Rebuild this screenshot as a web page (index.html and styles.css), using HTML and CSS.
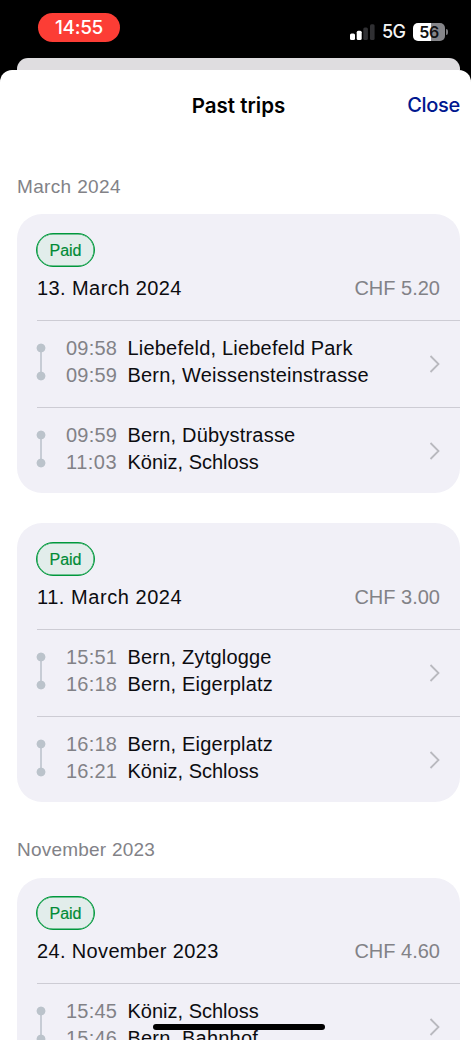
FILE: index.html
```html
<!DOCTYPE html>
<html lang="en">
<head>
<meta charset="utf-8">
<title>Past trips</title>
<link rel="stylesheet" href="styles.css">
</head>
<body>
<div class="screen">
  <header class="status">
    <span class="clock">14:55</span>
    <div class="status-right">
      <svg class="signal" width="25" height="17" viewBox="0 0 25 17"><g fill="#fff"><rect x="0" y="9.5" width="5" height="6.5" rx="1.5"/><rect x="6.7" y="6.8" width="5" height="9.2" rx="1.5"/></g><g fill="#303033"><rect x="13.3" y="3.6" width="4.6" height="12.4" rx="1.5"/><rect x="20" y="0.3" width="4.6" height="15.7" rx="1.5"/></g></svg>
      <span class="network">5G</span>
      <span class="battery">56</span>
      <span class="battery-cap"></span>
    </div>
  </header>
  <div class="back-sheet"></div>
  <main class="sheet">
    <div class="nav"><h1 class="title">Past trips</h1><a class="close">Close</a></div>
    <h2 class="month">March 2024</h2>
    <section class="card">
      <div class="card-head">
        <span class="badge">Paid</span>
        <div class="summary"><span class="date">13. March 2024</span><span class="price">CHF 5.20</span></div>
      </div>
      <div class="trip">
        <div class="track"></div>
        <div class="stops"><span class="time">09:58</span><span class="place">Liebefeld, Liebefeld Park</span><span class="time">09:59</span><span class="place">Bern, Weissensteinstrasse</span></div>
        <svg class="chevron" width="12" height="20" viewBox="0 0 12 20"><path d="M1.5 2 9.5 10l-8 8"/></svg>
      </div>
      <div class="trip">
        <div class="track"></div>
        <div class="stops"><span class="time">09:59</span><span class="place">Bern, Dübystrasse</span><span class="time eleven">11:03</span><span class="place tight">Köniz, Schloss</span></div>
        <svg class="chevron" width="12" height="20" viewBox="0 0 12 20"><path d="M1.5 2 9.5 10l-8 8"/></svg>
      </div>
    </section>
    <section class="card">
      <div class="card-head">
        <span class="badge">Paid</span>
        <div class="summary"><span class="date eleven">11. March 2024</span><span class="price">CHF 3.00</span></div>
      </div>
      <div class="trip">
        <div class="track"></div>
        <div class="stops"><span class="time">15:51</span><span class="place">Bern, Zytglogge</span><span class="time">16:18</span><span class="place">Bern, Eigerplatz</span></div>
        <svg class="chevron" width="12" height="20" viewBox="0 0 12 20"><path d="M1.5 2 9.5 10l-8 8"/></svg>
      </div>
      <div class="trip">
        <div class="track"></div>
        <div class="stops"><span class="time">16:18</span><span class="place">Bern, Eigerplatz</span><span class="time">16:21</span><span class="place tight">Köniz, Schloss</span></div>
        <svg class="chevron" width="12" height="20" viewBox="0 0 12 20"><path d="M1.5 2 9.5 10l-8 8"/></svg>
      </div>
    </section>
    <h2 class="month november">November 2023</h2>
    <section class="card">
      <div class="card-head last">
        <span class="badge">Paid</span>
        <div class="summary"><span class="date long">24. November 2023</span><span class="price">CHF 4.60</span></div>
      </div>
      <div class="trip">
        <div class="track"></div>
        <div class="stops"><span class="time">15:45</span><span class="place tight">Köniz, Schloss</span><span class="time">15:46</span><span class="place">Bern, Bahnhof</span></div>
        <svg class="chevron" width="12" height="20" viewBox="0 0 12 20"><path d="M1.5 2 9.5 10l-8 8"/></svg>
      </div>
    </section>
  </main>
  <div class="home-indicator"></div>
</div>
</body>
</html>
```
FILE: styles.css
```css
* { box-sizing: border-box; }
body { margin: 0; background: #000; overflow: hidden; }
.screen {
  position: relative;
  width: 471px;
  height: 1040px;
  overflow: hidden;
  background: #000;
  color: #0c0c10;
  font-family: "Liberation Sans", Arial, sans-serif;
  font-size: 20px;
}
.status {
  height: 58px;
  padding: 13px 23px 0 38px;
  display: flex;
  justify-content: space-between;
  align-items: flex-start;
  font-family: Inter, sans-serif;
}
.clock {
  width: 82px;
  height: 29px;
  border-radius: 15px;
  background: #fc3d35;
  color: #fff;
  font-size: 19px;
  font-weight: 500;
  line-height: 30px;
  text-align: center;
  letter-spacing: -0.3px;
}
.status-right { display: flex; align-items: center; padding-top: 10px; }
.signal { margin-top: 1px; }
.network {
  margin-left: 7px;
  width: 24px;
  color: #f4f4f4;
  font-size: 18px;
  font-weight: 500;
  line-height: 18px;
  letter-spacing: -0.6px;
}
.battery {
  margin-left: 7px;
  width: 32px;
  height: 18px;
  border-radius: 5px;
  background: linear-gradient(90deg, #fff 56%, #858589 56%);
  color: #111;
  font-size: 16px;
  font-weight: 600;
  line-height: 18px;
  text-align: center;
  letter-spacing: -0.3px;
}
.battery-cap { width: 2px; height: 6px; margin-left: 1px; border-radius: 0 2px 2px 0; background: #77777a; }
.back-sheet { height: 12px; margin: 0 11px 0 17px; border-radius: 11px 11px 0 0; background: #dfdde0; }
.sheet {
  height: 970px;
  padding: 0 11px 0 17px;
  border-radius: 12px 12px 0 0;
  background: #fff;
  overflow: hidden;
}
.nav {
  height: 70px;
  display: grid;
  grid-template-columns: 1fr auto 1fr;
  align-items: center;
  font-family: Inter, sans-serif;
}
.title { grid-column: 2; margin: 0; color: #000; font-size: 20.5px; font-weight: 600; letter-spacing: 0; }
.close { justify-self: end; color: #00178f; font-size: 20px; font-weight: 500; letter-spacing: -0.3px; }
.month {
  margin: 35px 0 15px;
  color: #828287;
  font-size: 19px;
  font-weight: 400;
  line-height: 24px;
  letter-spacing: 0.35px;
}
.november { margin: 36px 0 16px; letter-spacing: 0.22px; }
.card { border-radius: 25px; background: #f1f0f7; overflow: hidden; }
.card + .card { margin-top: 30px; }
.card-head { height: 106px; padding: 19px 20px 0 19px; }
.last { height: 105px; padding-top: 18px; }
.badge {
  display: block;
  width: 59px;
  height: 34px;
  border: 1.5px solid #00983c;
  border-radius: 17px;
  background: #e2edeb;
  color: #008b36;
  font-size: 16px;
  line-height: 33px;
  text-align: center;
  -webkit-text-stroke: 0.2px currentColor;
  box-shadow: inset 0 0 0 0.5px #00983c;
}
.summary { display: flex; justify-content: space-between; padding: 9px 0 0 1px; line-height: 24px; }
.date { letter-spacing: 0.42px; }
.date.eleven { letter-spacing: 0.55px; }
.date.long { letter-spacing: 0.35px; }
.price { color: #828287; }
.trip {
  position: relative;
  height: 86.5px;
  padding: 15px 20px 0 19px;
  display: flex;
  align-items: flex-start;
}
.trip::before {
  content: "";
  position: absolute;
  top: 0;
  left: 20px;
  right: 0;
  height: 1px;
  background: #cdccd4;
}
.track {
  width: 10px;
  height: 38px;
  margin-top: 8px;
  background:
    radial-gradient(circle at 5px 5px, #bbc3cb 4px, transparent 4.8px),
    radial-gradient(circle at 5px 33px, #bbc3cb 4px, transparent 4.8px),
    linear-gradient(#c7ccd5, #c7ccd5) 4px 5px / 2px 28px no-repeat;
}
.stops {
  flex: 1;
  margin-left: 20px;
  display: grid;
  grid-template-columns: 61.5px 1fr;
  grid-auto-rows: 27px;
  line-height: 27px;
}
.time { color: #828287; letter-spacing: 0.2px; }
.time.eleven { letter-spacing: 0.5px; }
.place { letter-spacing: 0.2px; white-space: nowrap; }
.place.tight { letter-spacing: 0; }
.chevron { margin: 19px -0.5px 0 0; }
.chevron path { fill: none; stroke: #b9b9bf; stroke-width: 1.8; }
.home-indicator {
  position: absolute;
  left: 153px;
  bottom: 10px;
  width: 172px;
  height: 6px;
  border-radius: 3px;
  background: #000;
}
```
